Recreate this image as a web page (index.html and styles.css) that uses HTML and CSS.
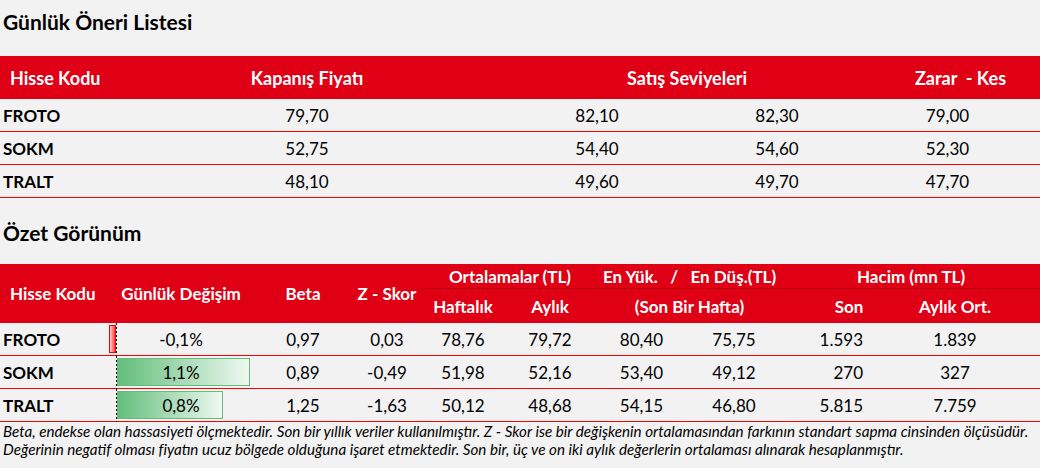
FILE: index.html
```html
<!DOCTYPE html>
<html lang="tr">
<head>
<meta charset="utf-8">
<link rel="stylesheet" href="styles.css">
</head>
<body>
<h1 class="title title-first">Günlük Öneri Listesi</h1>
<table class="grid t1">
  <colgroup>
    <col class="w210"><col class="w194"><col class="w103"><col class="w180"><col class="w180"><col class="w173">
  </colgroup>
  <thead>
    <tr class="head1">
      <th class="left">Hisse Kodu</th>
      <th>Kapanış Fiyatı</th>
      <th></th>
      <th colspan="2">Satış Seviyeleri</th>
      <th class="zk">Zarar&nbsp; - Kes</th>
    </tr>
  </thead>
  <tbody>
    <tr><td class="code">FROTO</td><td>79,70</td><td></td><td>82,10</td><td>82,30</td><td class="zkv">79,00</td></tr>
    <tr><td class="code">SOKM</td><td>52,75</td><td></td><td>54,40</td><td>54,60</td><td class="zkv">52,30</td></tr>
    <tr><td class="code">TRALT</td><td>48,10</td><td></td><td>49,60</td><td>49,70</td><td class="zkv">47,70</td></tr>
  </tbody>
</table>

<h1 class="title title-second">Özet Görünüm</h1>
<table class="grid t2">
  <colgroup>
    <col class="w107"><col class="w148"><col class="w96"><col class="w72"><col class="w80"><col class="w94"><col class="w89"><col class="w96"><col class="w134"><col class="w78"><col class="w46">
  </colgroup>
  <thead>
    <tr class="head-a">
      <th rowspan="2" class="left">Hisse Kodu</th>
      <th rowspan="2">Günlük Değişim</th>
      <th rowspan="2">Beta</th>
      <th rowspan="2">Z - Skor</th>
      <th colspan="2" class="grp">Ortalamalar (TL)</th>
      <th colspan="2" class="grp">En Yük.&nbsp;&nbsp; /&nbsp;&nbsp; En Düş.(TL)</th>
      <th colspan="3" class="grp">Hacim (mn TL)</th>
    </tr>
    <tr class="head-b">
      <th>Haftalık</th>
      <th>Aylık</th>
      <th colspan="2">(Son Bir Hafta)</th>
      <th>Son</th>
      <th>Aylık Ort.</th>
      <th></th>
    </tr>
  </thead>
  <tbody>
    <tr>
      <td class="code">FROTO</td>
      <td class="barcell"><span class="axis"></span><span class="bar neg" style="width:7px"></span><span class="val">-0,1%</span></td>
      <td>0,97</td><td>0,03</td><td>78,76</td><td>79,72</td><td>80,40</td><td>75,75</td><td class="son">1.593</td><td>1.839</td><td></td>
    </tr>
    <tr>
      <td class="code">SOKM</td>
      <td class="barcell"><span class="axis"></span><span class="bar pos" style="width:133px"></span><span class="val">1,1%</span></td>
      <td>0,89</td><td>-0,49</td><td>51,98</td><td>52,16</td><td>53,40</td><td>49,12</td><td class="son">270</td><td>327</td><td></td>
    </tr>
    <tr>
      <td class="code">TRALT</td>
      <td class="barcell"><span class="axis"></span><span class="bar pos" style="width:106px"></span><span class="val">0,8%</span></td>
      <td>1,25</td><td>-1,63</td><td>50,12</td><td>48,68</td><td>54,15</td><td>46,80</td><td class="son">5.815</td><td>7.759</td><td></td>
    </tr>
  </tbody>
</table>
<p class="note">Beta, endekse olan hassasiyeti ölçmektedir. Son bir yıllık veriler kullanılmıştır. Z - Skor ise bir değişkenin ortalamasından farkının standart sapma cinsinden ölçüsüdür.<br>Değerinin negatif olması fiyatın ucuz bölgede olduğuna işaret etmektedir. Son bir, üç ve on iki aylık değerlerin ortalaması alınarak hesaplanmıştır.</p>
</body>
</html>
```

FILE: styles.css
```css
html, body {
  margin: 0;
  padding: 0;
  background: #f2f2f2;
}
body {
  width: 1040px;
  height: 468px;
  overflow: hidden;
  font-family: Lato, "Open Sans", sans-serif;
  color: #000;
}
.title {
  margin: 0;
  box-sizing: border-box;
  font-size: 21px;
  font-weight: 700;
  line-height: 24px;
  padding-left: 3px;
}
.title-first {
  height: 56px;
  padding-top: 10px;
}
.title-second {
  height: 66px;
  padding-top: 23px;
}
.grid {
  width: 1040px;
  table-layout: fixed;
  border-collapse: collapse;
  border-spacing: 0;
}
.w210 { width: 210px; }
.w194 { width: 194px; }
.w103 { width: 103px; }
.w180 { width: 180px; }
.w173 { width: 173px; }
.w107 { width: 107px; }
.w148 { width: 148px; }
.w96 { width: 96px; }
.w72 { width: 72px; }
.w80 { width: 80px; }
.w94 { width: 94px; }
.w89 { width: 89px; }
.w134 { width: 134px; }
.w78 { width: 78px; }
.w46 { width: 46px; }

.grid th {
  background: #e00016;
  color: #fff;
  font-weight: 700;
  padding: 0;
  text-align: center;
  white-space: nowrap;
  vertical-align: middle;
}
.grid th.left {
  text-align: left;
  padding-left: 10px;
}
.t1 .head1 th {
  height: 43px;
  font-size: 18px;
}
.t1 th.zk {
  padding-left: 14px;
}
.grid td {
  padding: 0;
  height: 32px;
  font-size: 17px;
  text-align: center;
  vertical-align: middle;
  border-bottom: 1px solid #ff0000;
  white-space: nowrap;
}
.grid td.code {
  text-align: left;
  font-weight: 700;
  padding-left: 3px;
}
.t1 td.zkv {
  padding-right: 12px;
}
.t2 th {
  font-size: 17px;
}
.t2 .head-a th {
  height: 24px;
}
.t2 .head-a th.grp {
  border-bottom: 1px solid #b8000f;
}
.t2 .head-b th {
  height: 34px;
}
.t2 td.son {
  text-align: right;
  padding-right: 53px;
}
.barcell {
  position: relative;
}
.barcell .val {
  position: relative;
}
.axis {
  position: absolute;
  left: 9px;
  top: 0;
  bottom: -1px;
  width: 1px;
  background: repeating-linear-gradient(to bottom, #000 0 2px, transparent 2px 4px);
}
.bar {
  position: absolute;
  top: 2px;
  bottom: 2px;
  box-sizing: border-box;
}
.bar.pos {
  left: 10px;
  border: 1px solid #63be7b;
  background: linear-gradient(to right, #63be7b, #eef8f1);
}
.bar.neg {
  left: 2px;
  border: 1px solid #ff0000;
  background: linear-gradient(to left, #ff3b3b, #ffd0d0);
}
.note {
  margin: 0;
  padding: 0 0 0 3px;
  font-size: 15.2px;
  font-style: italic;
  line-height: 18px;
  white-space: nowrap;
}
```
